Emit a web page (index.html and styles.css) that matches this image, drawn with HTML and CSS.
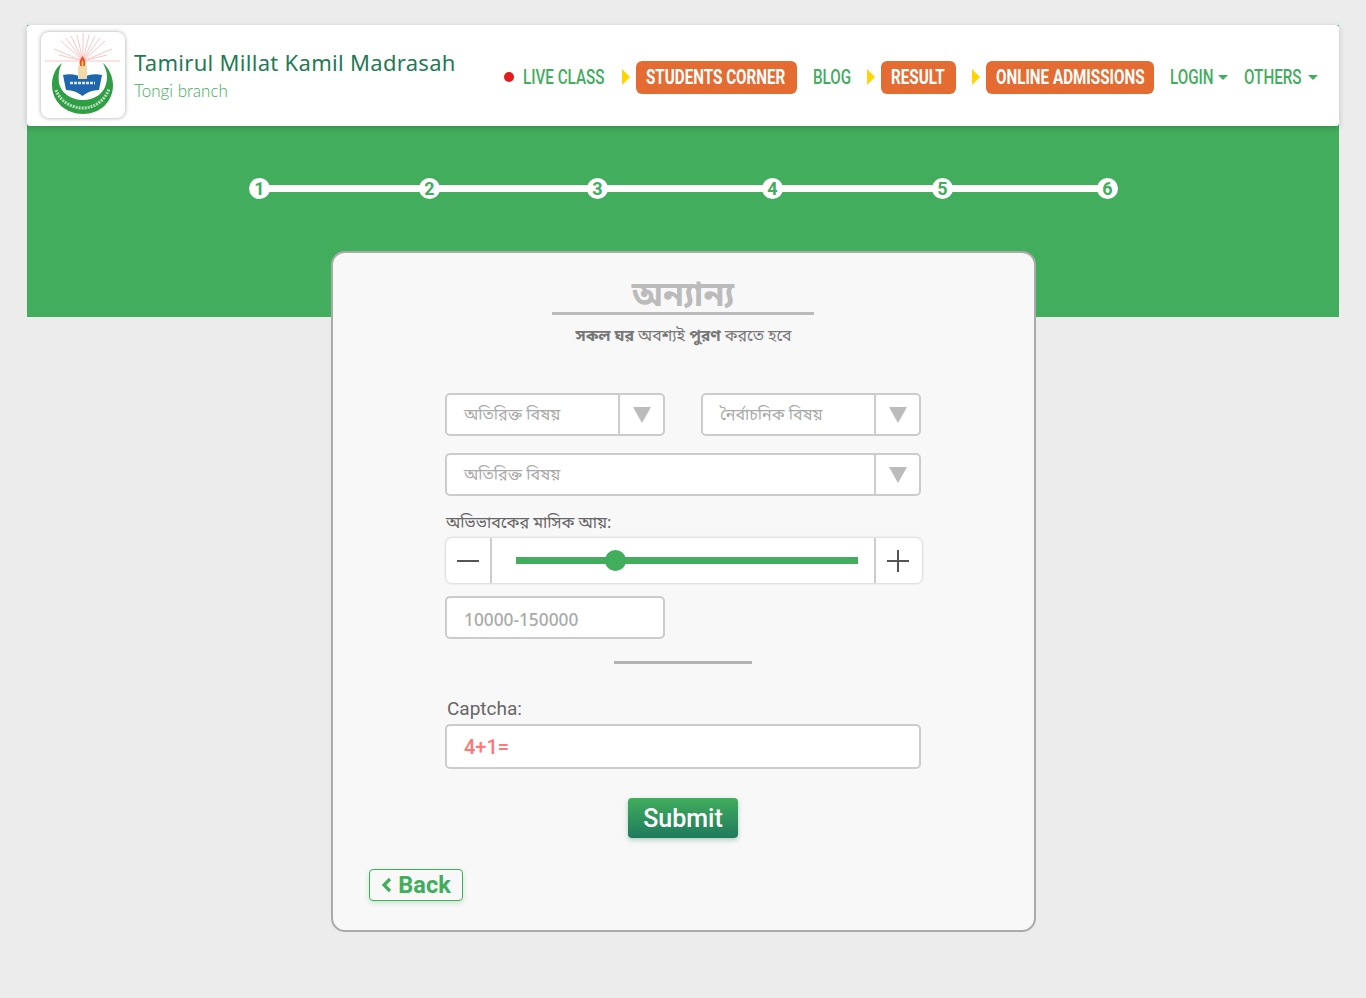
FILE: index.html
```html
<!DOCTYPE html>
<html lang="bn">
<head>
<meta charset="utf-8">
<title>Tamirul Millat Kamil Madrasah</title>
<link rel="stylesheet" href="styles.css">
</head>
<body>
<div class="hero">
  <header class="header">
    <div class="logo">
      <svg viewBox="0 0 84 84" width="84" height="84" aria-hidden="true">
        <g stroke="#f6c9c6" stroke-width="1" fill="none">
          <path d="M4 28H79M42 0V28M42 28L30 3M42 28L54 3M42 28L20 8M42 28L64 8M42 28L13 16M42 28L71 16M42 28L18 22M42 28L66 22M42 28L36 2M42 28L48 2M42 28L25 5M42 28L59 5"/>
        </g>
        <path d="M21 30C13 36 11 45 11 52C11 69 25 81 42 81C59 81 72 69 72 52C72 44 68 35 62 30C66 38 67 44 65 51C63 60 54 67 42 67C30 67 20 60 18 50C17 42 18 36 21 30Z" fill="#2f9e44"/>
        <path d="M22 42C30 40 37 42 41.500 45C46 42 53 40 61 42L58 57C52 57 46 59 41.500 63C37 59 31 57 25 57Z" fill="#1f66ae"/>
        <rect x="37" y="33" width="9" height="13" fill="#f1d9a8"/>
        <path d="M41.500 23C44.500 27 45 30 44 33H39C38 30 38.500 27 41.500 23Z" fill="#e8532b"/>
        <path d="M41.500 27C42.500 29 42.500 31 42.200 33H40.800C40.500 31 40.500 29 41.500 27Z" fill="#ffd43b"/>
        <path d="M29 50H54" stroke="#fff" stroke-width="2.500" stroke-dasharray="3 1" opacity=".85"/>
        <path d="M15 57C19 68 30 75 42 75C54 75 64 67 68 56" fill="none" stroke="#fff" stroke-width="3" stroke-dasharray="2 1" opacity=".65"/>
      </svg>
    </div>
    <div class="brand">
      <div class="brand-name">Tamirul Millat Kamil Madrasah</div>
      <div class="brand-sub">Tongi branch</div>
    </div>
    <nav class="nav">
      <span class="live-dot"></span>
      <a class="nav-link w-live"><span class="squeeze">LIVE CLASS</span></a>
      <span class="arrow"></span>
      <a class="nav-btn w-students"><span class="squeeze">STUDENTS CORNER</span></a>
      <a class="nav-link w-blog"><span class="squeeze">BLOG</span></a>
      <span class="arrow"></span>
      <a class="nav-btn w-result"><span class="squeeze">RESULT</span></a>
      <span class="arrow"></span>
      <a class="nav-btn w-online"><span class="squeeze">ONLINE ADMISSIONS</span></a>
      <a class="nav-link w-login has-caret"><span class="squeeze">LOGIN</span></a>
      <a class="nav-link w-others has-caret"><span class="squeeze">OTHERS</span></a>
    </nav>
  </header>
  <div class="stepper">
    <span class="step">1</span><span class="bar bar-1"></span>
    <span class="step">2</span><span class="bar bar-2"></span>
    <span class="step">3</span><span class="bar bar-3"></span>
    <span class="step">4</span><span class="bar bar-4"></span>
    <span class="step">5</span><span class="bar bar-5"></span>
    <span class="step">6</span>
  </div>
</div>
<main class="card">
  <h1 class="card-title">অন্যান্য</h1>
  <p class="card-note"><b>সকল ঘর</b> অবশ্যই <b>পুরণ</b> করতে হবে</p>
  <form class="form">
    <div class="row-2">
      <div class="select"><span class="select-text">অতিরিক্ত বিষয়</span><span class="select-btn"></span></div>
      <div class="select"><span class="select-text">নৈর্বাচনিক বিষয়</span><span class="select-btn"></span></div>
    </div>
    <div class="select select-full"><span class="select-text">অতিরিক্ত বিষয়</span><span class="select-btn"></span></div>
    <label class="bn-label">অভিভাবকের মাসিক আয়:</label>
    <div class="slider">
      <span class="slider-btn slider-minus"><svg width="24" height="24" viewBox="0 0 24 24"><path d="M1 12H23" stroke="#555" stroke-width="2"/></svg></span>
      <span class="slider-body"><span class="track"><span class="thumb"></span></span></span>
      <span class="slider-btn slider-plus"><svg width="24" height="24" viewBox="0 0 24 24"><path d="M1 12H23M12 1V23" stroke="#555" stroke-width="2"/></svg></span>
    </div>
    <input class="income" type="text" placeholder="10000-150000">
    <hr class="rule">
    <label class="captcha-label">Captcha:</label>
    <input class="captcha" type="text" placeholder="4+1=">
    <div class="submit-row"><button class="submit" type="button">Submit</button></div>
  </form>
  <a class="back"><svg width="11" height="16" viewBox="0 0 11 16"><path d="M9 2L3 8L9 14" fill="none" stroke="#41ad5d" stroke-width="3.200"/></svg>Back</a>
</main>
</body>
</html>
```
FILE: styles.css
```css
* { box-sizing: border-box; }
html, body { margin: 0; padding: 0; }
body {
  background: #ececec;
  font-family: "Noto Sans", "Noto Sans Bengali", "Lohit Bengali", "FreeSans", sans-serif;
  color: #666;
  min-height: 998px;
  padding: 25px 27px 66px;
}
.hero { background: #41ad5d; height: 292px; }
.header {
  display: flex;
  align-items: center;
  height: 101px;
  background: #fff;
  border-radius: 3px;
  padding: 0 21px 0 14px;
  box-shadow: 0 2px 6px rgba(0,0,0,.18);
}
.logo {
  width: 84px;
  height: 86px;
  margin-top: -1px;
  background: #fff;
  border-radius: 8px;
  box-shadow: 0 0 4px rgba(0,0,0,.35);
  flex: none;
  display: flex;
  align-items: center;
  justify-content: center;
}
.brand { margin-left: 9px; white-space: nowrap; flex: none; }
.brand-name { font-family: "Noto Sans", sans-serif; font-size: 22px; line-height: 28px; color: #1f7a55; letter-spacing: .3px; }
.brand-sub { font-family: Lato, sans-serif; font-weight: 300; font-size: 17px; line-height: 24px; color: #41ad5d; margin-top: 3px; }
.nav {
  margin-left: auto;
  display: flex;
  align-items: center;
  font-family: Roboto, sans-serif;
  font-size: 20px;
  margin-top: 3px;
  flex: none;
}
.squeeze { display: inline-block; transform: scaleX(.76); transform-origin: 0 50%; white-space: nowrap; }
.nav-link { display: flex; align-items: center; color: #41ad5d; margin-right: 16px; font-weight: 500; height: 33px; }
.nav-link:last-child { margin-right: 0; }
.live-dot { width: 10px; height: 10px; border-radius: 50%; background: #e31b1b; margin-right: 9px; }
.nav-btn {
  background: #e46c32;
  color: #fff;
  font-weight: 700;
  height: 33px;
  line-height: 33px;
  padding-left: 10px;
  border-radius: 6px;
  margin-right: 16px;
}
.w-live { width: 83px; }
.w-students { width: 161px; }
.w-blog { width: 38px; }
.w-result { width: 75px; }
.w-online { width: 168px; }
.w-login { width: 58px; }
.w-others { width: 74px; }
.arrow {
  width: 0; height: 0;
  border-left: 8px solid #ffd400;
  border-top: 8px solid transparent;
  border-bottom: 8px solid transparent;
  margin-right: 6px;
}
.has-caret { justify-content: space-between; }
.has-caret .squeeze { flex: none; width: 0; }
.has-caret::after {
  content: "";
  width: 0; height: 0;
  border-top: 5px solid #41ad5d;
  border-left: 5px solid transparent;
  border-right: 5px solid transparent;
}
.stepper {
  display: flex;
  align-items: center;
  margin: 52px 0 0 222px;
}
.step {
  width: 21px; height: 21px;
  flex: none;
  border-radius: 50%;
  background: #fff;
  color: #41ad5d;
  font: 700 18px/21px Roboto, sans-serif;
  text-align: center;
}
.bar { height: 7px; background: #fff; margin: 0 -1px; }
.bar-1 { width: 151px; }
.bar-2 { width: 149px; }
.bar-3 { width: 156px; }
.bar-4 { width: 151px; }
.bar-5 { width: 146px; }
.card {
  position: relative;
  width: 705px;
  height: 681px;
  margin: -66px 0 0 304px;
  background: #f8f8f8;
  border: 2px solid #aaa;
  border-radius: 14px;
  padding: 18px 0 0;
}
.card-title {
  width: 262px;
  margin: 0 0 0 219px;
  height: 44px;
  font-size: 34px;
  line-height: 44px;
  font-weight: 700;
  text-align: center;
  color: #bbb;
  border-bottom: 3px solid #bbb;
}
.card-note { margin: 8px 0 0; text-align: center; font-size: 15.800px; line-height: 24px; color: #777; }
.form { margin: 46px 0 0 112px; width: 476px; }
.row-2 { display: flex; justify-content: space-between; }
.select {
  display: flex;
  width: 220px;
  height: 43px;
  background: #fff;
  border: 2px solid #ccc;
  border-radius: 5px;
}
.select-full { width: 476px; margin-top: 17px; }
.select-text { flex: 1; padding-left: 17px; font-size: 16px; line-height: 38px; color: #aaa; }
.select-btn { width: 45px; border-left: 2px solid #ccc; display: flex; align-items: center; justify-content: center; }
.select-btn::after {
  content: "";
  width: 0; height: 0;
  border-top: 16px solid #bbb;
  border-left: 9px solid transparent;
  border-right: 9px solid transparent;
}
.bn-label { display: block; margin: 14px 0 0 1px; font-size: 16px; line-height: 24px; color: #666; }
.slider {
  display: flex;
  width: 476px;
  height: 45px;
  margin: 4px 0 0 1px;
  background: #fff;
  border-radius: 6px;
  box-shadow: 0 0 3px rgba(0,0,0,.25);
}
.slider-btn { display: flex; align-items: center; justify-content: center; flex: none; }
.slider-minus { width: 46px; border-right: 2px solid #ccc; }
.slider-plus { width: 48px; border-left: 2px solid #ccc; padding-right: 2px; }
.slider-body { flex: 1; display: flex; align-items: center; padding: 0 16px 0 24px; }
.track { position: relative; display: block; width: 100%; height: 7px; background: #41ad5d; }
.thumb { position: absolute; left: 89px; top: -7px; width: 21px; height: 21px; border-radius: 50%; background: #41ad5d; }
.income, .captcha {
  display: block;
  background: #fff;
  border: 2px solid #ccc;
  border-radius: 5px;
  padding: 0 17px;
  outline: none;
}
.income { width: 220px; height: 43px; margin-top: 13px; padding-top: 4px; font-family: "Noto Sans", sans-serif; font-weight: 500; font-size: 17.300px; }
.income::placeholder { color: #aaa; }
.rule { width: 138px; height: 3px; margin: 22px auto 0; border: 0; background: #b3b3b3; }
.captcha-label { display: block; margin: 31px 0 0 2px; font: 19px/28px Roboto, sans-serif; color: #666; }
.captcha { width: 476px; height: 45px; margin-top: 1px; font-family: Roboto, sans-serif; font-size: 20px; font-weight: 500; }
.captcha::placeholder { color: #f77; }
.submit-row { display: flex; justify-content: center; margin-top: 29px; }
.submit {
  width: 110px; height: 40px;
  border: 0;
  border-radius: 4px;
  background: linear-gradient(#41ad5d, #1f7a5c);
  color: #fff;
  font: 500 25px/42px Roboto, sans-serif;
  box-shadow: 0 2px 5px rgba(31,122,92,.35);
  padding: 0;
}
.back {
  position: absolute;
  left: 36px;
  top: 616px;
  width: 94px;
  height: 32px;
  display: flex;
  align-items: center;
  justify-content: center;
  gap: 6px;
  border: 1.500px solid #41ad5d;
  border-radius: 4px;
  color: #41ad5d;
  font: 700 23.500px/30px Roboto, sans-serif;
  box-shadow: 0 2px 5px rgba(65,173,93,.25);
}
```
